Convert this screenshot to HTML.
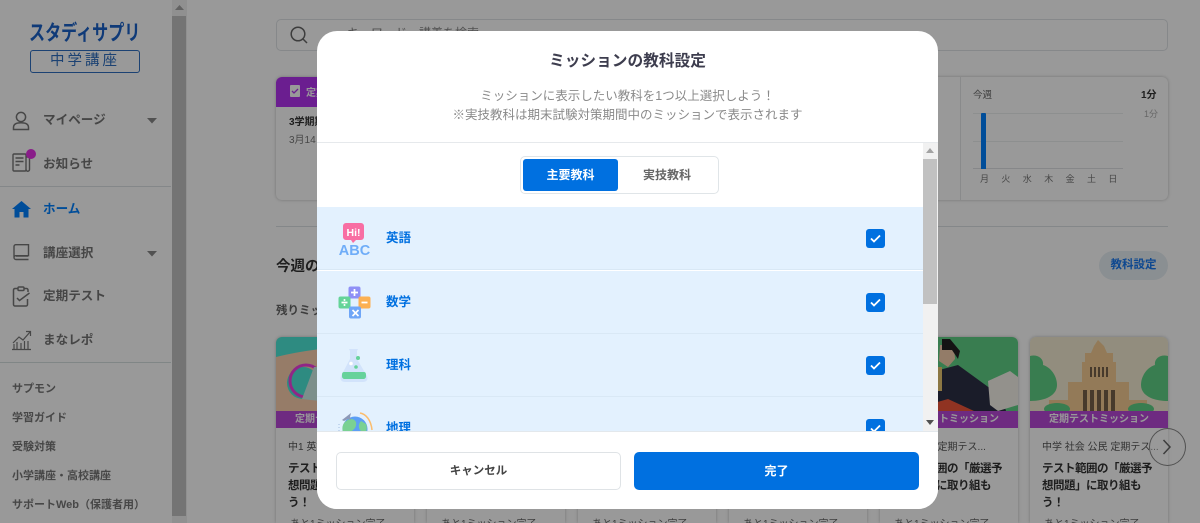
<!DOCTYPE html>
<html lang="ja"><head><meta charset="utf-8"><title>ミッションの教科設定</title>
<style>
*{box-sizing:border-box;margin:0;padding:0}
html,body{width:1200px;height:523px;overflow:hidden;background:#fff}
body{position:relative;font-family:"Liberation Sans","Noto Sans CJK JP",sans-serif;color:#333}
.a{position:absolute;white-space:nowrap}
.nav{left:43px;font-size:12.6px;font-weight:700;color:#757575;line-height:18px}
.lk{left:12px;font-size:11px;font-weight:700;color:#777;line-height:16px}
.ln{position:absolute;background:#dde1e4;height:1px}
.card{position:absolute;top:337px;width:138px;height:186px;border-radius:6px 6px 0 0;overflow:hidden;background:#fff;box-shadow:0 0 3px rgba(0,0,0,.25)}
.band{position:absolute;left:0;top:74px;width:138px;height:17px;background:#b848d8;color:#fff;font-size:10px;font-weight:700;text-align:center;line-height:17px}
.sub{position:absolute;left:12px;top:104px;font-size:10px;color:#555;line-height:14px;white-space:nowrap;width:120px;overflow:hidden}
.ttl{position:absolute;left:12px;top:124px;width:124px;font-size:11.5px;font-weight:700;line-height:17px;letter-spacing:-.5px;color:#333;white-space:nowrap}
.prg{position:absolute;left:14px;top:178px;font-size:10px;color:#666;white-space:nowrap}
#ov{position:absolute;inset:0;background:rgba(0,0,0,.4)}
#m{position:absolute;left:317px;top:31px;width:621px;height:478px;background:#fff;border-radius:20px;overflow:hidden}
.row{position:absolute;left:0;width:606px;height:63px;background:#e3f1fe;border-bottom:1px solid #d9e8f5}
.rt{position:absolute;left:69px;font-size:12.5px;font-weight:700;color:#0070e0;line-height:16px}
.cb{position:absolute;left:549px;width:19px;height:19px;border-radius:3px;background:#0070e0}
.cb svg{position:absolute;left:4px;top:5px}
.btn{position:absolute;top:421px;height:38px;width:285px;border-radius:5px;font-size:12px;font-weight:700;text-align:center;line-height:36px}
</style></head><body>

<!-- sidebar -->
<div class="a" style="left:29px;top:20px;font-size:21px;font-weight:700;color:#1a61c8;line-height:28px;transform-origin:left center;transform:scaleX(.765)">スタディサプリ</div>
<div class="a" style="left:30px;top:50px;width:110px;height:23px;border:1px solid #2f6fc0;border-radius:3px;color:#2f6fc0;font-size:14.5px;text-align:center;line-height:21px;letter-spacing:3px">中学講座</div>

<svg class="a" style="left:11px;top:110px" width="20" height="22" viewBox="0 0 20 22" fill="none" stroke="#777" stroke-width="1.5"><circle cx="10" cy="7" r="4.6"/><path d="M2.500 19.500v-2c0-3 2.600-4.700 7.500-4.700s7.500 1.700 7.500 4.700v2z"/></svg>
<div class="a nav" style="top:111px">マイページ</div>
<svg class="a" style="left:147px;top:118px" width="10" height="6"><path d="M0 0h10L5 5.500z" fill="#888"/></svg>

<svg class="a" style="left:11px;top:152px" width="21" height="21" viewBox="0 0 21 21" fill="none" stroke="#777" stroke-width="1.4"><rect x="2" y="2" width="13" height="17" rx="1"/><path d="M15 5h3.500v12.500a1.700 1.700 0 0 1-3.500 0M4.500 6h8M4.500 9.500h8M4.500 13h4"/></svg>
<div class="a" style="left:26px;top:149px;width:10px;height:10px;border-radius:50%;background:#e431e4"></div>
<div class="a nav" style="top:155px">お知らせ</div>
<div class="ln" style="left:0;top:186px;width:171px"></div>

<svg class="a" style="left:11px;top:200px" width="21" height="18" viewBox="0 0 21 18"><path d="M10.500 1L20 9h-2.500v8.500h-5V12h-4v5.500h-5V9H1z" fill="#0080ff"/></svg>
<div class="a nav" style="top:200px;color:#0080ff">ホーム</div>

<svg class="a" style="left:12px;top:243px" width="19" height="19" viewBox="0 0 19 19" fill="none" stroke="#777" stroke-width="1.4"><path d="M2 14V3.500A1.800 1.800 0 0 1 3.800 1.700H16.500v11H3.800A1.800 1.800 0 0 0 2 14.500a2 2 0 0 0 2 2h12.500M4 13h12"/></svg>
<div class="a nav" style="top:244px">講座選択</div>
<svg class="a" style="left:147px;top:251px" width="10" height="6"><path d="M0 0h10L5 5.500z" fill="#888"/></svg>

<svg class="a" style="left:12px;top:286px" width="20" height="21" viewBox="0 0 20 21" fill="none" stroke="#777" stroke-width="1.5"><path d="M6 2.500H3a1.500 1.500 0 0 0-1.500 1.500v14.500A1.500 1.500 0 0 0 3 20h11a1.500 1.500 0 0 0 1.500-1.500V13M12 2.500h2.500A1.500 1.500 0 0 1 16 4v2"/><rect x="6" y="1" width="6" height="3.500" rx="1"/><path d="M5 12l2.500 2.500L17.500 7"/></svg>
<div class="a nav" style="top:287px">定期テスト</div>

<svg class="a" style="left:11px;top:330px" width="21" height="21" viewBox="0 0 21 21" fill="none" stroke="#777" stroke-width="1.2"><path d="M1 19.500h19M3 19v-5M6 19v-7M10 19v-6M13.500 19v-8M17 19v-8M2 13l6-6 4 3 7-8M15 1.500h4.500V6"/></svg>
<div class="a nav" style="top:331px">まなレポ</div>
<div class="ln" style="left:0;top:362px;width:171px;background:#d5e0e0"></div>

<div class="a lk" style="top:381px">サプモン</div>
<div class="a lk" style="top:410px">学習ガイド</div>
<div class="a lk" style="top:439px">受験対策</div>
<div class="a lk" style="top:468px">小学講座・高校講座</div>
<div class="a lk" style="top:497px">サポートWeb（保護者用）</div>

<!-- page scrollbar -->
<div class="a" style="left:172px;top:0;width:15px;height:523px;background:#f1f1f1"></div>
<div class="a" style="left:172px;top:16px;width:14px;height:500px;background:#c1c1c1"></div>
<svg class="a" style="left:175px;top:5px" width="9" height="6"><path d="M0 5L4.500 0 9 5z" fill="#a3a3a3"/></svg>

<!-- search -->
<div class="a" style="left:276px;top:19px;width:892px;height:32px;border:1px solid #dfe3e6;border-radius:5px"></div>
<svg class="a" style="left:289px;top:25px" width="20" height="20" viewBox="0 0 20 20" fill="none" stroke="#666" stroke-width="1.5"><circle cx="9" cy="9" r="6.800"/><path d="M14 14l4 4"/></svg>
<div class="a" style="left:347px;top:25px;font-size:12px;color:#888;line-height:17px">キーワード・講義を検索</div>

<!-- top panels -->
<div class="a" style="left:276px;top:77px;width:892px;height:123px;border-radius:6px;box-shadow:0 0 3px rgba(0,0,0,.25);background:#fff"></div>
<div class="a" style="left:276px;top:77px;width:120px;height:30px;background:#b233f0;border-radius:6px 6px 0 0"></div>
<svg class="a" style="left:290px;top:85px" width="10" height="12"><rect width="10" height="12" rx="1" fill="#fff"/><path d="M2 6l2 2 4-4" stroke="#b233f0" fill="none" stroke-width="1.3"/></svg>
<div class="a" style="left:306px;top:84px;font-size:10px;font-weight:700;color:#fff">定期テスト</div>
<div class="a" style="left:289px;top:113px;font-size:10px;font-weight:700;color:#333">3学期期末</div>
<div class="a" style="left:289px;top:131px;font-size:10px;color:#777">3月14日</div>
<div class="ln" style="left:276px;top:226px;width:892px"></div>
<div class="a" style="left:960px;top:77px;width:1px;height:123px;background:#e4e6e8"></div>
<div class="a" style="left:973px;top:87px;font-size:9.5px;color:#666">今週</div>
<div class="a" style="left:1141px;top:86px;font-size:10px;color:#333;font-weight:700">1分</div>
<div class="a" style="left:1144px;top:107px;font-size:9px;color:#aaa">1分</div>
<div class="ln" style="left:973px;top:113px;width:150px;background:#eceeef"></div>
<div class="ln" style="left:973px;top:141px;width:150px;background:#eceeef"></div>
<div class="ln" style="left:973px;top:168px;width:150px;background:#e0e2e4"></div>
<div class="a" style="left:981px;top:113px;width:5px;height:56px;background:#0080ff;border-radius:1px 1px 0 0"></div>
<div class="a" style="left:980px;top:172px;font-size:9px;color:#777;letter-spacing:12.4px">月火水木金土日</div>

<!-- section -->
<div class="a" style="left:276px;top:257px;font-size:14.5px;font-weight:700;color:#333;line-height:20px">今週のミッション</div>
<div class="a" style="left:1099px;top:251px;width:69px;height:29px;border-radius:15px;background:#e7eef4;color:#1878f0;font-size:11.5px;font-weight:700;text-align:center;line-height:29px">教科設定</div>
<div class="a" style="left:276px;top:303px;font-size:11.5px;font-weight:700;color:#666;line-height:16px">残りミッション</div>

<!-- cards -->
<div class="card" style="left:276px">
<svg width="138" height="74" style="position:absolute;left:0;top:0"><rect width="138" height="74" fill="#fbcfae"/><path d="M0 0h138v14C90 6 40 10 0 20z" fill="#4de8d8"/><circle cx="27" cy="46" r="16" fill="#4de8d8"/><circle cx="30" cy="44" r="16" fill="none" stroke="#f040e0" stroke-width="3"/><path d="M26 62l12-32 8 0-2 34z" fill="#cfeee8"/></svg>
<div class="band">定期テストミッション</div><div class="sub">中1 英語 定期テスト</div><div class="ttl">テスト範囲の「厳選予<br>想問題」に取り組も<br>う！</div><div class="prg">あと1ミッション完了</div></div>
<div class="card" style="left:427px"><div class="ttl">テスト範囲の「厳選予<br>想問題」に取り組も<br>う！</div><div class="prg">あと1ミッション完了</div></div>
<div class="card" style="left:578px"><div class="ttl">テスト範囲の「厳選予<br>想問題」に取り組も<br>う！</div><div class="prg">あと1ミッション完了</div></div>
<div class="card" style="left:729px"><div class="ttl">テスト範囲の「厳選予<br>想問題」に取り組も<br>う！</div><div class="prg">あと1ミッション完了</div></div>
<div class="card" style="left:880px">
<svg width="138" height="74" style="position:absolute;left:0;top:0"><rect width="138" height="74" fill="#5fd085"/><path d="M48 74V36L78 28 122 60 126 74z" fill="#2c2f45"/><path d="M60 8h14l1 14-7 8-9-6z" fill="#f5cfae"/><path d="M62 2h8l10 12-2 8-6-9-10 0z" fill="#222"/><path d="M58 74l-4-8 14-4 26 12z" fill="#f1563a"/><path d="M108 44l22-10 8 6v28l-20 6-8-6z" fill="#f5f2ea"/><path d="M58 30h4v24h-4z" fill="#e9c670"/></svg>
<div class="band">定期テストミッション</div><div class="sub">中学 歴史 定期テス...</div><div class="ttl">テスト範囲の「厳選予<br>想問題」に取り組も<br>う！</div><div class="prg">あと1ミッション完了</div></div>
<div class="card" style="left:1030px">
<svg width="138" height="74" viewBox="0 0 138 74" style="position:absolute;left:0;top:0"><rect width="138" height="74" fill="#f3ecd2"/><path d="M68 3l6 6 3 7h6v9h3v20h13v18h18v11H19V63h19V45h14V25h3v-9h6l3-7z" fill="#f5cc93"/><g fill="#77624a"><rect x="60" y="30" width="2" height="10"/><rect x="64" y="30" width="2" height="10"/><rect x="68" y="30" width="2" height="10"/><rect x="72" y="30" width="2" height="10"/><rect x="76" y="30" width="2" height="10"/><rect x="53" y="53" width="4" height="21"/><rect x="60" y="53" width="4" height="21"/><rect x="67" y="53" width="4" height="21"/><rect x="74" y="53" width="4" height="21"/><rect x="81" y="53" width="4" height="21"/></g><path d="M0 19c8-2 14 3 13 9 7 2 14 10 14 20 0 10-11 16-27 16z" fill="#5fd085"/><path d="M138 19c-8-2-14 3-13 9-7 2-14 10-14 20 0 10 11 16 27 16z" fill="#5fd085"/><ellipse cx="27" cy="72" rx="13" ry="6" fill="#5fd085"/><ellipse cx="111" cy="72" rx="13" ry="6" fill="#5fd085"/></svg>
<div class="band">定期テストミッション</div><div class="sub">中学 社会 公民 定期テス...</div><div class="ttl">テスト範囲の「厳選予<br>想問題」に取り組も<br>う！</div><div class="prg">あと1ミッション完了</div></div>

<div class="a" style="left:1149px;top:428px;width:37px;height:38px;border-radius:50%;background:rgba(255,255,255,.35);border:1px solid #888"></div>
<svg class="a" style="left:1161px;top:438px" width="12" height="18" fill="none" stroke="#666" stroke-width="1.5"><path d="M2.500 2l6.500 7-6.500 7"/></svg>

<div id="ov"></div>

<!-- modal -->
<div id="m">
 <div class="a" style="left:0;width:621px;top:20px;text-align:center;font-size:15.7px;font-weight:700;color:#3d3d4e;line-height:22px">ミッションの教科設定</div>
 <div class="a" style="left:0;width:621px;top:56px;text-align:center;font-size:12.5px;color:#8a8a8a;line-height:19px">ミッションに表示したい教科を1つ以上選択しよう！<br>※実技教科は期末試験対策期間中のミッションで表示されます</div>
 <div class="a" style="left:0;top:111px;width:621px;height:1px;background:#e6e9ec"></div>

 <div class="a" style="left:203px;top:125px;width:199px;height:38px;border:1px solid #e0e5e8;border-radius:5px"></div>
 <div class="a" style="left:206px;top:128px;width:95px;height:32px;background:#0070e0;border-radius:3px;color:#fff;font-size:12px;font-weight:700;text-align:center;line-height:32px">主要教科</div>
 <div class="a" style="left:301px;top:128px;width:98px;height:32px;color:#666;font-size:12px;font-weight:700;text-align:center;line-height:32px">実技教科</div>

 <div class="row" style="top:176px"></div>
 <div class="row" style="top:240px"></div>
 <div class="row" style="top:303px"></div>
 <div class="row" style="top:366px;height:35px;border:0"></div>

 <svg class="a" style="left:21px;top:191px" width="33" height="34" viewBox="0 0 33 34"><path d="M8 1h15a3 3 0 0 1 3 3v11a3 3 0 0 1-3 3h-5l-3 3-2-3H8a3 3 0 0 1-3-3V4a3 3 0 0 1 3-3z" fill="#f86ea3"/><text x="15.500" y="14" text-anchor="middle" font-family="Liberation Sans" font-weight="700" font-size="10.5" fill="#fff">Hi!</text><text x="16.500" y="33" text-anchor="middle" font-family="Liberation Sans" font-weight="700" font-size="14.5" fill="#6fadf8">ABC</text></svg>
 <div class="rt" style="top:199px">英語</div>
 <div class="cb" style="top:198px"><svg width="11" height="9" fill="none" stroke="#fff" stroke-width="1.8"><path d="M1 4.500l3 3 6-6"/></svg></div>

 <svg class="a" style="left:21px;top:255px" width="33" height="33" viewBox="0 0 33 33"><rect x="10.500" y="0.500" width="12" height="12" rx="2" fill="#8f90f6"/><rect x="0.500" y="10.500" width="12" height="12" rx="2" fill="#64d498"/><rect x="20.500" y="10.500" width="12" height="12" rx="2" fill="#fcb052"/><rect x="11" y="20.500" width="12" height="12" rx="2" fill="#6fa6f7"/><g stroke="#fff" stroke-width="1.7" fill="none"><path d="M13 6.500h7M16.500 3v7M3.500 16.500h6M23.500 16.500h6M14.500 24l6 6M20.500 24l-6 6"/></g><circle cx="6.500" cy="14" r="1" fill="#fff"/><circle cx="6.500" cy="19" r="1" fill="#fff"/></svg>
 <div class="rt" style="top:263px">数学</div>
 <div class="cb" style="top:262px"><svg width="11" height="9" fill="none" stroke="#fff" stroke-width="1.8"><path d="M1 4.500l3 3 6-6"/></svg></div>

 <svg class="a" style="left:23px;top:318px" width="28" height="34" viewBox="0 0 28 34"><path d="M9 0h9l-1 2v8l10 17c1.500 4-1 6-4 6H5c-3 0-5.500-2-4-6l9-17V2z" fill="#d2e3fb"/><path d="M4 23h20c2 0 2 2 2 4 0 2-1 3-3 3H5c-2 0-3-1-3-3 0-2 0-4 2-4z" fill="#66d29b"/><circle cx="18" cy="9" r="2" fill="#66d29b"/><circle cx="16" cy="18" r="1.800" fill="#66d29b"/><circle cx="11" cy="14.500" r="1.800" fill="#fff"/></svg>
 <div class="rt" style="top:326px">理科</div>
 <div class="cb" style="top:325px"><svg width="11" height="9" fill="none" stroke="#fff" stroke-width="1.8"><path d="M1 4.500l3 3 6-6"/></svg></div>

 <svg class="a" style="left:21px;top:381px" width="35" height="20" viewBox="0 0 35 20"><circle cx="17" cy="17" r="12.500" fill="#5c9ff5"/><path d="M7 10c4-4 9-4 11 0 1 5-2 8-6 10H5c-1-3-1-7 2-10zM23 9l5 3c1 2 1 5 0 8h-4c-4-3-4-8-1-11z" fill="#7ad193"/><path d="M22 1c6 1 11 7 12 17" stroke="#fbbd6e" stroke-width="1.500" fill="none"/><path d="M4 8L13 1l-1 4 1 3-3-1-4 2z" fill="#8d99b8"/><path d="M1 12v8" stroke="#a3bde0" stroke-dasharray="1 2"/></svg>
 <div class="rt" style="top:389px">地理</div>
 <div class="cb" style="top:388px"><svg width="11" height="9" fill="none" stroke="#fff" stroke-width="1.8"><path d="M1 4.500l3 3 6-6"/></svg></div>

 <div class="a" style="left:606px;top:112px;width:15px;height:289px;background:#f1f1f1"></div>
 <div class="a" style="left:606px;top:128px;width:14px;height:145px;background:#c1c1c1"></div>
 <svg class="a" style="left:609px;top:117px" width="8" height="5"><path d="M0 5L4 0l4 5z" fill="#a3a3a3"/></svg>
 <svg class="a" style="left:609px;top:389px" width="8" height="5"><path d="M0 0h8L4 5z" fill="#505050"/></svg>

 <div class="a" style="left:0;top:400px;width:621px;height:78px;background:#fff;border-top:1px solid #e3e8ec"></div>
 <div class="btn" style="left:19px;background:#fff;border:1px solid #dfe3e6;color:#444;font-size:11.5px">キャンセル</div>
 <div class="btn" style="left:317px;background:#0070e0;color:#fff;line-height:38px">完了</div>
</div>
</body></html>
